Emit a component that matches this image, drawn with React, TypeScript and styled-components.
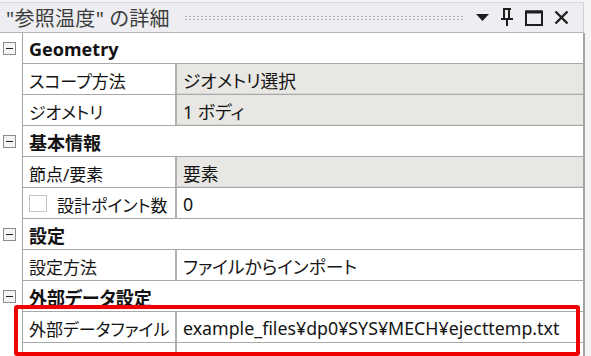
import styled, { createGlobalStyle } from 'styled-components';

const GlobalStyle = createGlobalStyle`
  html, body {
    margin: 0;
    padding: 0;
    background: #f4f4f6;
  }
  body {
    font-family: "Noto Sans", "Noto Sans CJK JP", sans-serif;
    font-feature-settings: "palt";
  }
`;

const Window = styled.div`
  position: relative;
  width: 591px;
  height: 356px;
  overflow: hidden;
  display: flex;
  flex-direction: column;
  background: #f4f4f6;
`;

const TitleBar = styled.div`
  height: 33px;
  margin-top: 2px;
  width: 584px;
  box-sizing: border-box;
  display: flex;
  align-items: center;
  gap: 8px;
  padding: 0 14px 0 6px;
  background: #eeeef2;
  border-top: 1px solid #d8d8e0;
  border-right: 1px solid #d0d0d8;
  border-bottom: 1px solid #b4b4b8;
`;

const Title = styled.span`
  font-size: 20px;
  color: #3c3c3c;
  white-space: nowrap;
  letter-spacing: 0.3px;
`;

const Grip = styled.div`
  flex: 1;
  height: 6px;
  margin: 0 4px 0 6px;
  background-image: radial-gradient(circle, #b0b0b8 0.9px, transparent 1.1px);
  background-size: 4px 3px;
`;

const TitleIcons = styled.div`
  display: flex;
  align-items: center;
  gap: 11px;
`;

const Table = styled.div`
  width: 585px;
  display: flex;
  flex-direction: column;
  background: #fff;
  border-right: 2px solid #a4a4a4;
  box-sizing: border-box;
`;

const Row = styled.div`
  display: grid;
  grid-template-columns: 23px 154px 1fr;
  height: 31px;
`;

const Gutter = styled.div`
  display: flex;
  align-items: center;
  justify-content: center;
  padding-right: 1px;
  border-right: 1px solid #a4a4a4;
`;

const Toggle = styled.div`
  width: 11px;
  height: 11px;
  border: 1px solid #8c8c8c;
  background: #f4f4f4;
  display: flex;
  align-items: center;
  justify-content: center;
  margin-left: -3px;

  &::after {
    content: '';
    width: 7px;
    height: 1.5px;
    background: #202020;
  }
`;

const GroupCell = styled.div`
  grid-column: 2 / 4;
  display: flex;
  align-items: center;
  padding: 2px 0 0 6px;
  font-size: 18px;
  font-weight: 700;
  color: #111;
  border-bottom: 1px solid #a8a8a8;
`;

const Cell = styled.div<{ $readOnly?: boolean; $label?: boolean }>`
  display: flex;
  align-items: center;
  gap: 10px;
  padding: 2px 0 0 6px;
  font-size: ${({ $label }) => ($label ? '17px' : '17.8px')};
  color: #141414;
  white-space: nowrap;
  overflow: hidden;
  border-bottom: 1px solid #a8a8a8;
  border-right: ${({ $label }) => ($label ? '2px solid #b0b0b0' : 'none')};
  background: ${({ $readOnly }) => ($readOnly ? '#e8e7e3' : '#fff')};
  box-shadow: ${({ $readOnly }) => ($readOnly ? 'inset 0 -1px 0 #d6d6d2' : 'none')};
`;

const CheckBox = styled.span`
  width: 18px;
  height: 17px;
  margin-top: -2px;
  box-sizing: border-box;
  border: 1px solid #c4c4c4;
  background: #fff;
  flex-shrink: 0;
`;

const Highlight = styled.div`
  position: absolute;
  left: 14px;
  top: 305px;
  width: 566px;
  height: 51px;
  box-sizing: border-box;
  border: 4px solid #f00000;
  border-radius: 3px;
  pointer-events: none;
`;

const DropIcon = () => (
  <svg width="13" height="7" viewBox="0 0 13 7">
    <path d="M0 0 H13 L6.5 7 Z" fill="#1e1e1e" />
  </svg>
);

const PinIcon = () => (
  <svg width="14" height="19" viewBox="0 0 14 19">
    <path d="M3 1 H11 M4 1 V11 M9 1 V11 M1 11 H13 M7 11 V18" stroke="#1e1e1e" strokeWidth="2" fill="none" />
  </svg>
);

const MaxIcon = () => (
  <svg width="18" height="16" viewBox="0 0 18 16">
    <rect x="1" y="1.5" width="16" height="13.5" stroke="#1e1e1e" strokeWidth="2" fill="none" />
    <path d="M1 2 H17" stroke="#1e1e1e" strokeWidth="3" />
  </svg>
);

const CloseIcon = () => (
  <svg width="15" height="15" viewBox="0 0 15 15">
    <path d="M1.5 1.5 L13.5 13.5 M13.5 1.5 L1.5 13.5" stroke="#1e1e1e" strokeWidth="2.4" />
  </svg>
);

type Item =
  | { kind: 'group'; title: string }
  | { kind: 'prop'; label: string; value: string; readOnly?: boolean; check?: boolean };

const items: Item[] = [
  { kind: 'group', title: 'Geometry' },
  { kind: 'prop', label: 'スコープ方法', value: 'ジオメトリ選択', readOnly: true },
  { kind: 'prop', label: 'ジオメトリ', value: '1 ボディ', readOnly: true },
  { kind: 'group', title: '基本情報' },
  { kind: 'prop', label: '節点/要素', value: '要素', readOnly: true },
  { kind: 'prop', label: '設計ポイント数', value: '0', check: true },
  { kind: 'group', title: '設定' },
  { kind: 'prop', label: '設定方法', value: 'ファイルからインポート' },
  { kind: 'group', title: '外部データ設定' },
  { kind: 'prop', label: '外部データファイル', value: 'example_files¥dp0¥SYS¥MECH¥ejecttemp.txt' },
  { kind: 'prop', label: '', value: '' },
];

export default function App() {
  return (
    <>
      <GlobalStyle />
      <Window>
        <TitleBar>
          <Title>"参照温度" の詳細</Title>
          <Grip />
          <TitleIcons>
            <DropIcon />
            <PinIcon />
            <MaxIcon />
            <CloseIcon />
          </TitleIcons>
        </TitleBar>
        <Table>
          {items.map((item, i) =>
            item.kind === 'group' ? (
              <Row key={i}>
                <Gutter>
                  <Toggle />
                </Gutter>
                <GroupCell>{item.title}</GroupCell>
              </Row>
            ) : (
              <Row key={i}>
                <Gutter />
                <Cell $label>
                  {item.check ? <CheckBox /> : null}
                  {item.label}
                </Cell>
                <Cell $readOnly={item.readOnly}>{item.value}</Cell>
              </Row>
            )
          )}
        </Table>
        <Highlight />
      </Window>
    </>
  );
}
